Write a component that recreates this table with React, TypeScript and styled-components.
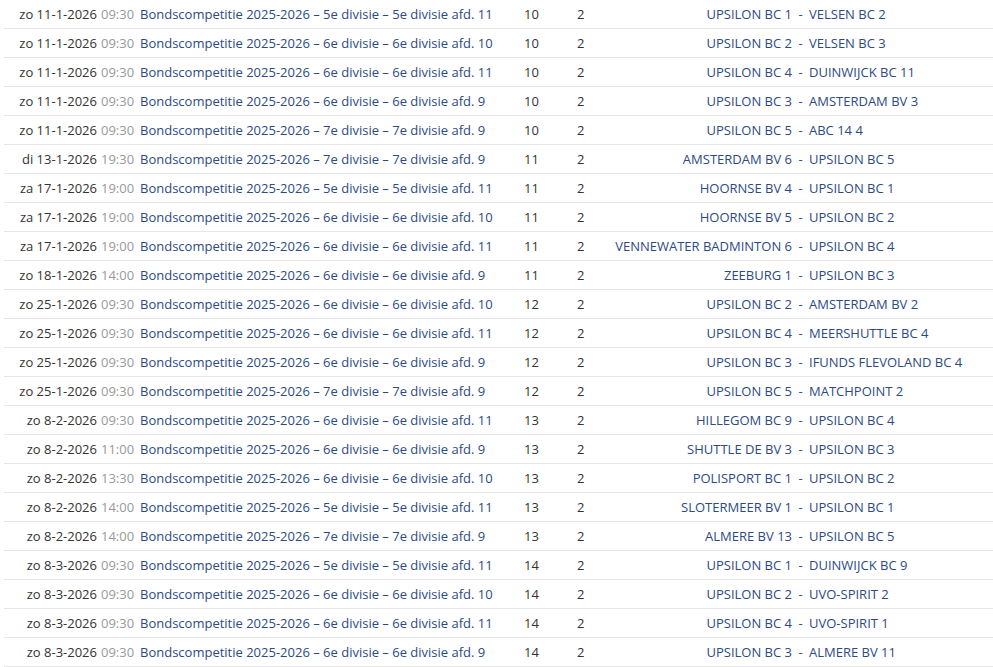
import React from 'react';
import styled, { createGlobalStyle } from 'styled-components';

type Match = {
  day: string;
  time: string;
  division: string;
  round: number;
  home: string;
  away: string;
};

const divisions: Record<string, string> = {
  '5-11': '5e divisie – 5e divisie afd. 11',
  '6-10': '6e divisie – 6e divisie afd. 10',
  '6-11': '6e divisie – 6e divisie afd. 11',
  '6-9': '6e divisie – 6e divisie afd. 9',
  '7-9': '7e divisie – 7e divisie afd. 9',
};

const m = (day: string, time: string, div: string, round: number, home: string, away: string): Match => ({
  day,
  time,
  division: divisions[div],
  round,
  home,
  away,
});

const matches: Match[] = [
  m('zo 11-1-2026', '09:30', '5-11', 10, 'UPSILON BC 1', 'VELSEN BC 2'),
  m('zo 11-1-2026', '09:30', '6-10', 10, 'UPSILON BC 2', 'VELSEN BC 3'),
  m('zo 11-1-2026', '09:30', '6-11', 10, 'UPSILON BC 4', 'DUINWIJCK BC 11'),
  m('zo 11-1-2026', '09:30', '6-9', 10, 'UPSILON BC 3', 'AMSTERDAM BV 3'),
  m('zo 11-1-2026', '09:30', '7-9', 10, 'UPSILON BC 5', 'ABC 14 4'),
  m('di 13-1-2026', '19:30', '7-9', 11, 'AMSTERDAM BV 6', 'UPSILON BC 5'),
  m('za 17-1-2026', '19:00', '5-11', 11, 'HOORNSE BV 4', 'UPSILON BC 1'),
  m('za 17-1-2026', '19:00', '6-10', 11, 'HOORNSE BV 5', 'UPSILON BC 2'),
  m('za 17-1-2026', '19:00', '6-11', 11, 'VENNEWATER BADMINTON 6', 'UPSILON BC 4'),
  m('zo 18-1-2026', '14:00', '6-9', 11, 'ZEEBURG 1', 'UPSILON BC 3'),
  m('zo 25-1-2026', '09:30', '6-10', 12, 'UPSILON BC 2', 'AMSTERDAM BV 2'),
  m('zo 25-1-2026', '09:30', '6-11', 12, 'UPSILON BC 4', 'MEERSHUTTLE BC 4'),
  m('zo 25-1-2026', '09:30', '6-9', 12, 'UPSILON BC 3', 'IFUNDS FLEVOLAND BC 4'),
  m('zo 25-1-2026', '09:30', '7-9', 12, 'UPSILON BC 5', 'MATCHPOINT 2'),
  m('zo 8-2-2026', '09:30', '6-11', 13, 'HILLEGOM BC 9', 'UPSILON BC 4'),
  m('zo 8-2-2026', '11:00', '6-9', 13, 'SHUTTLE DE BV 3', 'UPSILON BC 3'),
  m('zo 8-2-2026', '13:30', '6-10', 13, 'POLISPORT BC 1', 'UPSILON BC 2'),
  m('zo 8-2-2026', '14:00', '5-11', 13, 'SLOTERMEER BV 1', 'UPSILON BC 1'),
  m('zo 8-2-2026', '14:00', '7-9', 13, 'ALMERE BV 13', 'UPSILON BC 5'),
  m('zo 8-3-2026', '09:30', '5-11', 14, 'UPSILON BC 1', 'DUINWIJCK BC 9'),
  m('zo 8-3-2026', '09:30', '6-10', 14, 'UPSILON BC 2', 'UVO-SPIRIT 2'),
  m('zo 8-3-2026', '09:30', '6-11', 14, 'UPSILON BC 4', 'UVO-SPIRIT 1'),
  m('zo 8-3-2026', '09:30', '6-9', 14, 'UPSILON BC 3', 'ALMERE BV 11'),
];

export default function App() {
  return (
    <>
      <GlobalStyle />
      <Wrapper>
        <MatchTable>
          <colgroup>
            <col style={{ width: 93 }} />
            <col style={{ width: 43 }} />
            <col style={{ width: 384 }} />
            <col style={{ width: 53 }} />
            <col style={{ width: 30 }} />
            <col style={{ width: 185 }} />
            <col style={{ width: 17 }} />
            <col />
          </colgroup>
          <tbody>
            {matches.map((match, i) => (
              <Row key={i}>
                <DateCell>{match.day}</DateCell>
                <TimeCell>{match.time}</TimeCell>
                <Cell>
                  <Link href="#">Bondscompetitie 2025-2026 – {match.division}</Link>
                </Cell>
                <Cell>{match.round}</Cell>
                <Cell>2</Cell>
                <TeamCell align="right">
                  <Link href="#">{match.home}</Link>
                </TeamCell>
                <DashCell>-</DashCell>
                <TeamCell align="left">
                  <Link href="#">{match.away}</Link>
                </TeamCell>
              </Row>
            ))}
          </tbody>
        </MatchTable>
      </Wrapper>
    </>
  );
}

const GlobalStyle = createGlobalStyle`
  body {
    margin: 0;
    background: #fff;
    font-family: "Open Sans", "Noto Sans", sans-serif;
    font-size: 13px;
    color: #333;
    overflow: hidden;
  }
`;

const Wrapper = styled.div`
  padding-left: 4px;
`;

const MatchTable = styled.table`
  width: 100%;
  table-layout: fixed;
  border-collapse: collapse;
`;

const Row = styled.tr`
  border-bottom: 1px solid #e6e6e6;
`;

const Cell = styled.td`
  height: 28px;
  padding: 0;
  line-height: 28px;
  white-space: nowrap;
  vertical-align: middle;
`;

const DateCell = styled(Cell)`
  text-align: right;
  color: #333;
`;

const TimeCell = styled(Cell)`
  padding-left: 4px;
  color: #999;
`;

const TeamCell = styled(Cell)<{ align: 'left' | 'right' }>`
  text-align: ${({ align }) => align};
`;

const DashCell = styled(Cell)`
  text-align: center;
  color: #2b4a87;
`;

const Link = styled.a`
  color: #2b4a87;
  text-decoration: none;
`;
